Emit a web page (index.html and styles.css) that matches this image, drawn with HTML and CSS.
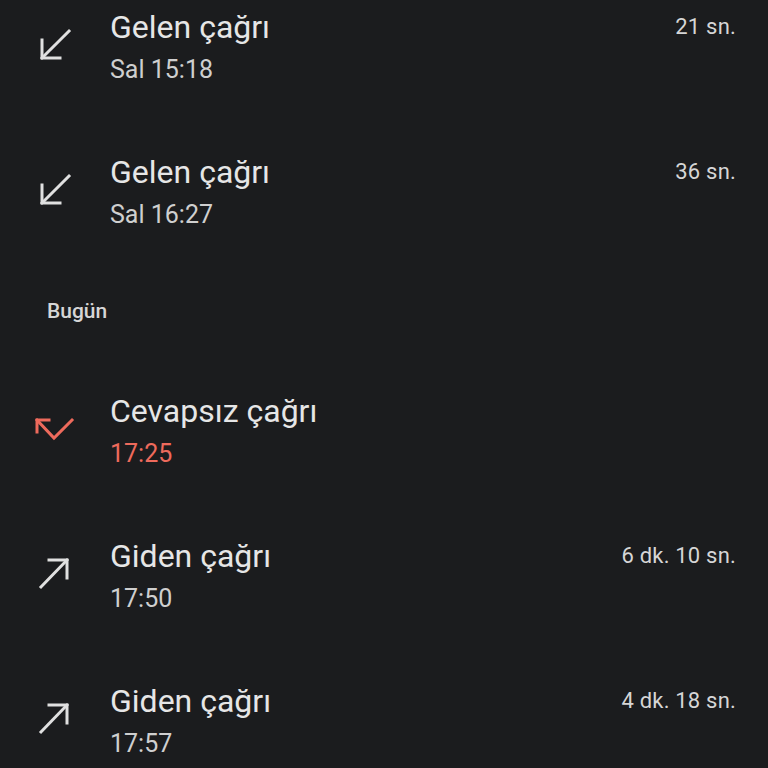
FILE: index.html
```html
<!DOCTYPE html>
<html lang="tr">
<head>
  <meta charset="UTF-8" />
  <meta name="viewport" content="width=device-width, initial-scale=1" />
  <title>Arama geçmişi</title>
  <link rel="stylesheet" href="styles.css">
</head>
<body>
  <div class="call-list">
    <div class="call-row">
      <svg class="call-icon" viewBox="0 0 48 48">
        <polyline points="12,15 12,33 30,33" />
        <line x1="12" y1="33" x2="39" y2="6" />
      </svg>
      <div class="call-body">
        <div class="call-top">
          <span class="call-title">Gelen çağrı</span>
          <span class="call-duration">21 sn.</span>
        </div>
        <div class="call-time">Sal 15:18</div>
      </div>
    </div>

    <div class="call-row">
      <svg class="call-icon" viewBox="0 0 48 48">
        <polyline points="12,15 12,33 30,33" />
        <line x1="12" y1="33" x2="39" y2="6" />
      </svg>
      <div class="call-body">
        <div class="call-top">
          <span class="call-title">Gelen çağrı</span>
          <span class="call-duration">36 sn.</span>
        </div>
        <div class="call-time">Sal 16:27</div>
      </div>
    </div>

    <div class="day-header">Bugün</div>

    <div class="call-row missed">
      <svg class="call-icon" viewBox="0 0 48 48">
        <polyline points="7,23 7,11 19,11" />
        <polyline points="7,11 24,29 42,11" />
      </svg>
      <div class="call-body">
        <div class="call-top">
          <span class="call-title">Cevapsız çağrı</span>
        </div>
        <div class="call-time">17:25</div>
      </div>
    </div>

    <div class="call-row">
      <svg class="call-icon" viewBox="0 0 48 48">
        <polyline points="19,6 37,6 37,24" />
        <line x1="37" y1="6" x2="11" y2="33" />
      </svg>
      <div class="call-body">
        <div class="call-top">
          <span class="call-title">Giden çağrı</span>
          <span class="call-duration">6 dk. 10 sn.</span>
        </div>
        <div class="call-time">17:50</div>
      </div>
    </div>

    <div class="call-row">
      <svg class="call-icon" viewBox="0 0 48 48">
        <polyline points="19,6 37,6 37,24" />
        <line x1="37" y1="6" x2="11" y2="33" />
      </svg>
      <div class="call-body">
        <div class="call-top">
          <span class="call-title">Giden çağrı</span>
          <span class="call-duration">4 dk. 18 sn.</span>
        </div>
        <div class="call-time">17:57</div>
      </div>
    </div>
  </div>
</body>
</html>
```

FILE: styles.css
```css
html, body {
  margin: 0;
  background: #1b1c1e;
  height: 100%;
  overflow: hidden;
}
body {
  font-family: Roboto, "Noto Sans", sans-serif;
  color: #e3e3e3;
}
.call-list {
  margin-top: -24px;
}
.call-row {
  display: flex;
  align-items: center;
  height: 145px;
  padding: 0 32px 0 30px;
  box-sizing: border-box;
}
.call-icon {
  width: 48px;
  height: 48px;
  flex-shrink: 0;
  margin-right: 32px;
  fill: none;
  stroke: #e0e0e0;
  stroke-width: 3;
  stroke-linecap: square;
  stroke-linejoin: miter;
}
.call-body {
  flex: 1;
}
.call-top {
  display: flex;
  justify-content: space-between;
  align-items: center;
  height: 36px;
}
.call-title {
  font-size: 32px;
  line-height: 36px;
  color: #e6e6e6;
}
.call-duration {
  font-size: 22px;
  line-height: 36px;
  letter-spacing: 0.2px;
  color: #d6d6d6;
}
.call-time {
  margin-top: 7px;
  font-size: 25px;
  line-height: 36px;
  color: #cfcfcf;
}
.missed .call-icon {
  stroke: #ee6a5c;
}
.missed .call-time {
  color: #ee6a5c;
}
.day-header {
  height: 94px;
  box-sizing: border-box;
  padding: 33px 0 0 47px;
  font-size: 21px;
  line-height: 24px;
  font-weight: 500;
  color: #d6d6d6;
}
```
